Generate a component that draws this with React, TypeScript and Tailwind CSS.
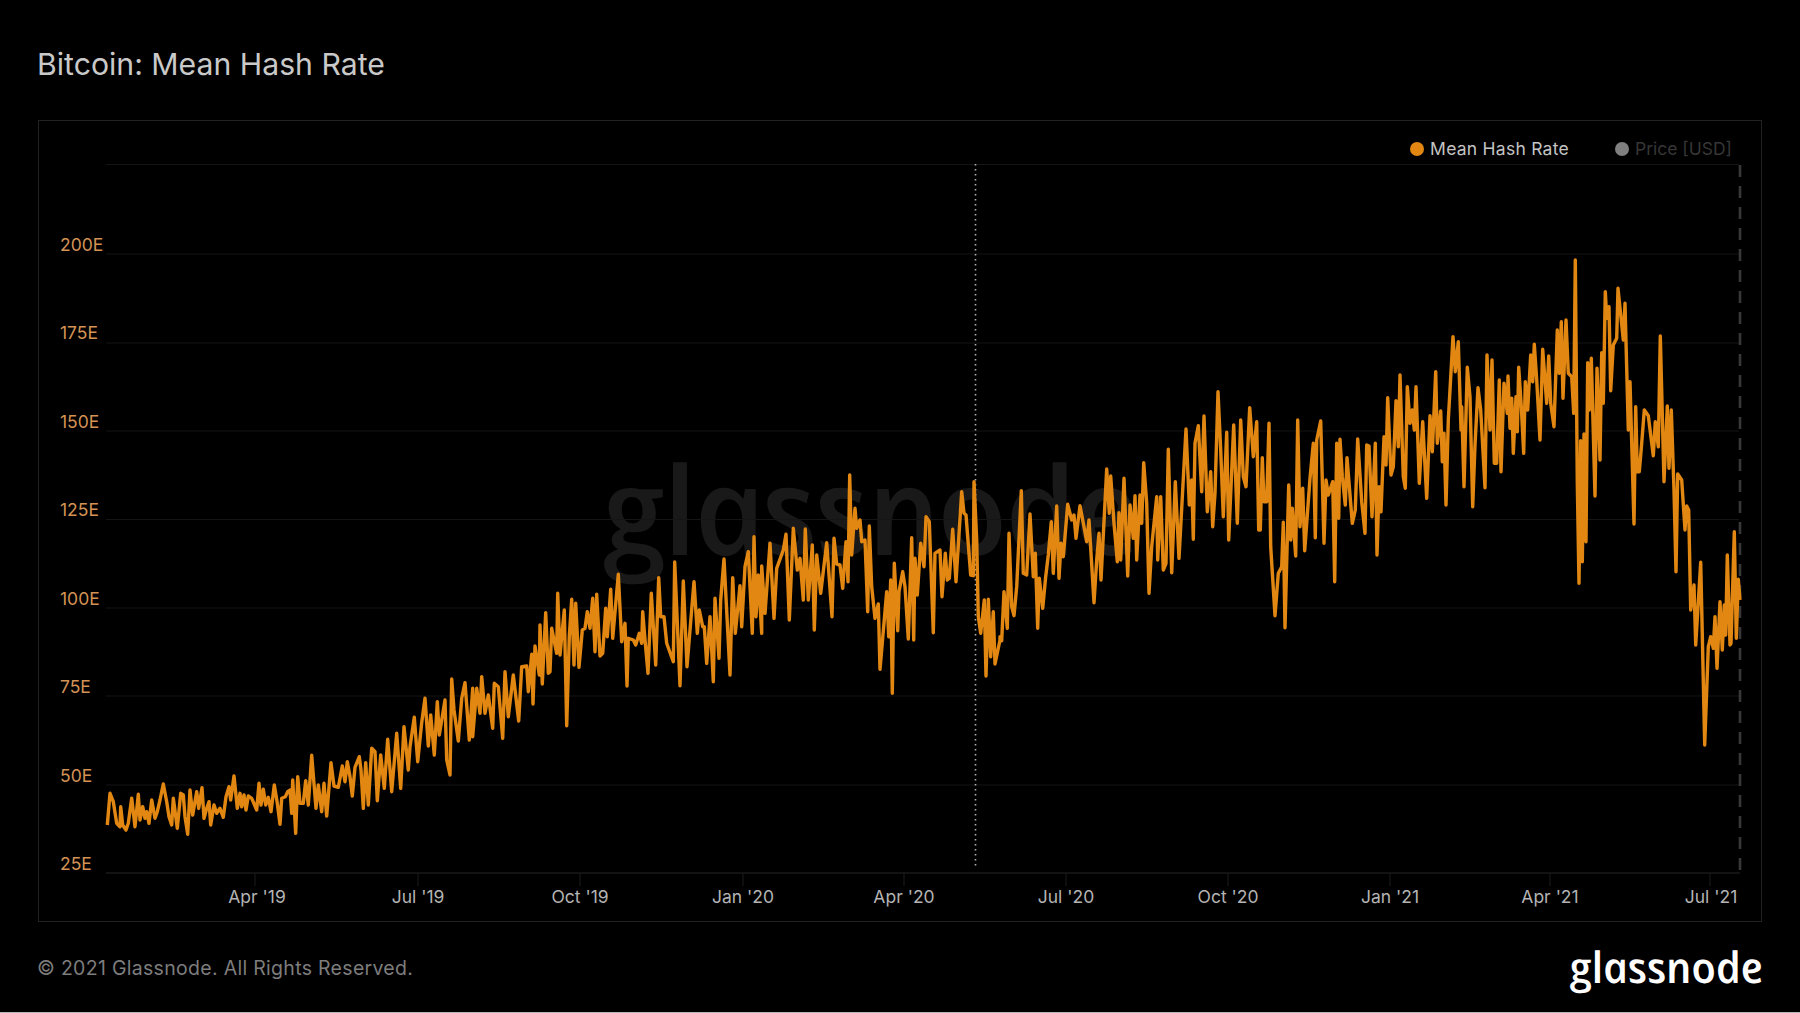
const yLabels = [
  { label: '200E', y: 245 },
  { label: '175E', y: 333 },
  { label: '150E', y: 422 },
  { label: '125E', y: 510 },
  { label: '100E', y: 599 },
  { label: '75E', y: 687 },
  { label: '50E', y: 776 },
  { label: '25E', y: 864 },
];

const gridLines = [164.5, 254, 343, 431, 519.5, 608, 696, 785];

const xLabels = [
  { label: "Apr '19", x: 257, tick: 255 },
  { label: "Jul '19", x: 418, tick: 418 },
  { label: "Oct '19", x: 580, tick: 580 },
  { label: "Jan '20", x: 743, tick: 743 },
  { label: "Apr '20", x: 904, tick: 904 },
  { label: "Jul '20", x: 1066, tick: 1066 },
  { label: "Oct '20", x: 1228, tick: 1228 },
  { label: "Jan '21", x: 1390, tick: 1390 },
  { label: "Apr '21", x: 1550, tick: 1550 },
  { label: "Jul '21", x: 1711, tick: 1710 },
];

// traced off the reference in four chunks, values are [x, y] at 3x from the chunk origin
const traces: { ox: number; oy: number; pts: number[] }[] = [
  {
    ox: 100,
    oy: 560,
    pts: [
      22,795,30,700,40,725,50,790,60,800,62,740,68,795,78,810,85,790,95,715,105,800,115,703,120,780,128,740,135,775,140,755,147,790,155,720,165,775,172,755,180,720,190,672,200,725,207,770,215,795,220,715,232,805,242,700,250,705,255,770,263,823,270,690,278,765,290,695,296,745,306,683,312,775,320,745,327,725,332,795,342,735,350,760,360,745,370,772,378,710,387,680,392,720,402,648,412,745,420,700,425,740,432,705,438,750,445,708,455,715,470,750,477,670,483,735,490,688,497,735,505,712,513,755,523,675,532,730,540,793,545,715,556,710,563,695,570,690,575,760,578,660,587,820,593,650,600,730,610,730,617,662,625,735,635,586,648,745,655,675,665,755,672,670,680,768,693,608,702,678,715,682,727,618,735,665,742,605,750,650,757,708,765,622,778,590,783,630,790,745,797,608,805,735,815,565,825,575,832,722,842,585,853,685,863,538,875,695,890,520,902,685,912,500,925,630,930,560,943,472,953,605,965,488,975,415,985,558,992,465,1003,585,1012,425,1018,525,1035,420,1040,600,1050,645,1055,357,1062,450,1075,543,1085,415,1095,368,1108,540,1118,385,1118,530,1130,385,1140,460,1145,350,1155,460,1165,405,1178,505,1183,370,1195,380,1208,535,1215,335,1225,470,1240,345,1256,483,1265,320,1280,318,1285,395,1295,283,1299,432,1305,258,1318,345,1320,195,1327,372,1337,158,1345,340,
    ],
  },
  {
    ox: 550,
    oy: 440,
    pts: [
      0,695,5,565,20,640,23,460,30,645,43,510,50,857,58,590,65,478,72,675,77,490,87,682,97,570,105,565,112,515,120,565,128,475,135,635,140,463,150,648,158,640,167,505,172,590,182,448,188,595,205,403,215,605,225,550,231,738,235,595,250,600,257,615,268,580,275,610,278,515,285,600,294,700,304,460,317,675,326,413,332,530,342,530,350,610,370,665,374,366,390,737,400,423,411,680,432,425,442,580,448,510,458,560,463,560,470,670,480,530,490,725,495,475,507,655,512,480,522,357,540,705,548,413,556,580,570,437,575,560,585,380,595,335,607,580,612,290,618,530,625,405,635,580,635,378,645,520,660,310,672,535,680,385,700,330,708,283,718,540,730,265,742,390,750,355,760,480,766,267,775,480,787,315,793,570,800,345,812,460,830,308,846,530,852,295,860,372,870,375,878,445,888,305,894,425,899,105,905,345,915,205,920,265,930,240,935,305,945,300,953,515,958,258,965,440,975,535,985,492,990,688,1010,455,1016,590,1022,420,1027,760,1033,370,1043,572,1047,455,1058,395,1065,440,1075,597,1085,293,1091,600,1095,355,1102,465,1112,310,1122,380,1128,230,1138,245,1150,578,1155,340,1170,330,1176,470,1186,340,1192,420,1198,415,1208,268,1218,425,1235,155,1242,220,1248,225,1262,405,1270,407,1272,125,1280,300,1285,530,1292,580,1303,480,1308,708,1315,478,1322,650,1330,515,1335,672,1350,600,
    ],
  },
  {
    ox: 1000,
    oy: 360,
    pts: [
      0,830,5,842,12,695,22,805,27,520,35,740,42,767,50,680,64,392,70,640,80,645,90,462,100,650,106,580,113,805,118,655,128,745,137,650,145,585,154,485,160,640,170,438,177,655,183,550,190,590,203,433,215,480,222,465,228,535,240,437,252,500,260,545,267,480,282,728,290,600,297,520,303,660,320,327,328,460,332,348,342,490,352,605,357,458,362,600,372,355,383,648,390,435,400,535,405,407,410,600,420,405,425,490,431,308,440,430,447,700,455,560,470,410,473,600,482,410,490,630,498,610,505,268,515,638,526,365,537,595,558,207,568,435,575,360,580,538,585,250,595,197,605,395,612,168,622,455,632,335,638,500,645,400,654,95,662,270,670,470,680,217,686,540,701,195,712,490,722,180,730,350,738,380,749,143,760,290,770,185,776,510,781,510,787,293,792,425,800,425,807,190,812,560,825,767,835,640,845,620,850,487,855,803,866,375,872,540,877,445,887,588,893,180,900,500,908,385,914,572,930,355,940,250,946,533,950,240,962,183,972,550,978,360,985,405,998,365,1004,665,1010,250,1016,475,1020,238,1027,350,1036,435,1041,293,1057,490,1066,450,1073,237,1085,425,1095,520,1100,255,1107,258,1116,470,1126,250,1131,585,1137,380,1143,455,1152,230,1158,315,
    ],
  },
  {
    ox: 1380,
    oy: 250,
    pts: [
      23,443,33,675,40,650,48,452,55,590,60,375,70,680,76,715,82,410,90,520,97,480,103,540,108,410,118,700,128,515,140,745,150,497,157,605,167,365,172,580,182,483,187,635,192,550,198,765,205,510,219,260,226,365,235,275,243,540,245,470,252,710,262,352,270,440,278,770,285,585,294,413,302,480,315,713,321,315,330,540,336,330,343,640,350,640,358,390,363,665,372,400,382,490,384,378,390,535,395,445,400,610,408,440,412,545,416,352,424,470,431,610,436,395,443,480,452,315,458,395,463,283,470,390,480,570,488,298,500,460,506,318,512,460,522,530,532,240,538,370,544,215,549,445,558,210,565,370,575,380,581,490,586,30,592,700,597,1000,602,572,607,935,612,552,618,875,623,338,628,480,634,325,645,738,651,355,660,630,665,308,670,460,676,125,680,205,687,170,692,422,700,285,710,265,714,115,730,270,735,160,745,540,750,395,762,822,767,470,772,665,778,665,785,580,793,480,805,497,820,617,826,515,835,590,841,258,852,695,862,468,867,655,874,480,882,720,888,965,893,672,905,690,915,840,920,768,926,780,932,1080,942,1005,947,1185,962,937,974,1485,985,1190,992,1160,1000,1195,1005,1100,1011,1255,1020,1055,1027,1200,1033,1065,1037,1155,1042,915,1050,1185,1053,1180,1063,845,1069,1165,1075,988,1080,1050,
    ],
  },
];

const linePoints = traces
  .flatMap(({ ox, oy, pts }) => {
    const out: string[] = [];
    for (let i = 0; i < pts.length; i += 2) {
      out.push(`${(ox + pts[i] / 3).toFixed(1)},${(oy + pts[i + 1] / 3).toFixed(1)}`);
    }
    return out;
  })
  .join(' ');

export default function App() {
  return (
    <div className="flex h-[1013px] w-full flex-col bg-black font-['Inter',sans-serif]">
      <div className="flex flex-1 flex-col px-[38px] pt-[46px]">
        <h1 className="-ml-px text-[30.2px] leading-[36px] font-normal text-[#c9c9c9]">Bitcoin: Mean Hash Rate</h1>

        <div className="relative mt-[38px] h-[802px] border border-[#222222]">
          <div className="absolute left-[559px] top-[312px] inline-block skew-x-[12deg] font-['Open_Sans',sans-serif] text-[122px] leading-[150px] font-semibold tracking-[-2.5px] text-[#191919] italic">
            glassnode
          </div>
          <svg className="absolute inset-0 h-full w-full" viewBox="39 121 1722 800">
            {gridLines.map((y) => (
              <line key={y} x1={106} x2={1739} y1={y} y2={y} stroke="#151515" strokeWidth={1} />
            ))}
            <line x1={106} x2={1740} y1={873} y2={873} stroke="#262626" strokeWidth={1} />
            {xLabels.map(({ label, x, tick }) => (
              <g key={label}>
                <line x1={tick} x2={tick} y1={873} y2={886} stroke="#1c1c1c" strokeWidth={1} />
                <text x={x} y={903} textAnchor="middle" fontSize={17.5} fill="#b4b4b4">
                  {label}
                </text>
              </g>
            ))}
            {yLabels.map(({ label, y }) => (
              <text key={label} x={60} y={y + 6} fontSize={17.5} fill="#d49355">
                {label}
              </text>
            ))}
            <line x1={975.5} x2={975.5} y1={164} y2={868} stroke="#b0b0b0" strokeWidth={1.6} strokeDasharray="1.6 3.4" />
            <line x1={1740} x2={1740} y1={165} y2={870} stroke="#383838" strokeWidth={2.6} strokeDasharray="12 9" />
            <polyline points={linePoints} fill="none" stroke="#e28812" strokeWidth={3.4} strokeLinejoin="round" />
          </svg>

          <div className="absolute right-[29px] top-[17px] flex items-center gap-[46px] text-[17.5px] leading-[22px]">
            <div className="flex items-center gap-[6px] tracking-[0.25px] text-[#c4c4c4]">
              <span className="h-[14px] w-[14px] rounded-full bg-[#e28812]" />
              Mean Hash Rate
            </div>
            <div className="flex items-center gap-[6px] text-[#363636]">
              <span className="h-[14px] w-[14px] rounded-full bg-[#808080]" />
              Price [USD]
            </div>
          </div>
        </div>

        <div className="flex flex-1 items-center justify-between pt-[3px]">
          <span className="-ml-px text-[19.5px] tracking-[0.3px] text-[#7d7d7d]">© 2021 Glassnode. All Rights Reserved.</span>
          <span className="-mt-[3px] inline-block skew-x-[12deg] font-['Open_Sans',sans-serif] text-[43px] leading-[50px] font-semibold tracking-[-0.25px] text-white italic">
            glassnode
          </span>
        </div>
      </div>
      <div className="h-px bg-[#b8b8b8]" />
    </div>
  );
}
